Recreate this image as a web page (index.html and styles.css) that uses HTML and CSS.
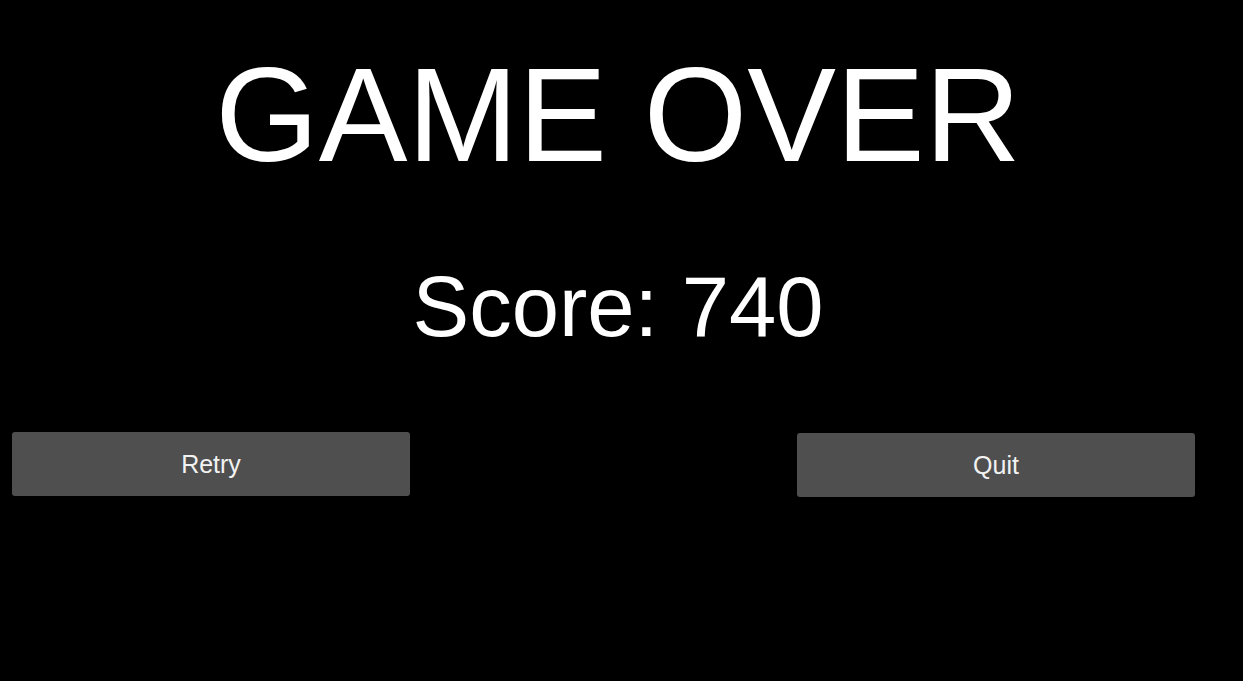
FILE: index.html
```html
<!DOCTYPE html>
<html lang="en">
<head>
    <meta charset="UTF-8">
    <meta name="viewport" content="width=device-width, initial-scale=1.0">
    <title>Game Over</title>
    <link rel="stylesheet" href="styles.css">
</head>
<body>
    <div id="end-screen">
        <h1 class="title">GAME OVER</h1>
        <div class="score">Score: <span id="final-score">740</span></div>

        <div class="actions">
            <button class="btn" onclick="retry()">Retry</button>
            <button class="btn" onclick="quit()">Quit</button>
        </div>
    </div>

    <script>
        // Reload the page to start a fresh round
        function retry() {
            location.reload();
        }

        function quit() {
            window.close();
        }
    </script>
</body>
</html>
```

FILE: styles.css
```css
html, body {
    margin: 0;
    height: 100%;
    background-color: #000;
}

body {
    font-family: "Liberation Sans", Arial, sans-serif;
    color: #fff;
}

#end-screen {
    display: flex;
    flex-direction: column;
    align-items: center;
    padding: 49px 7px 0 0;
}

.title {
    margin: 0;
    font-size: 133px;
    font-weight: normal;
    line-height: 133px;
}

.score {
    margin-top: 82px;
    font-size: 85px;
    line-height: 85px;
}

.actions {
    align-self: stretch;
    display: flex;
    justify-content: space-between;
    margin-top: 83px;
    padding: 0 41px 0 12px;
}

.btn {
    width: 398px;
    height: 64px;
    display: flex;
    align-items: center;
    justify-content: center;
    padding: 0;
    border: none;
    border-radius: 3px;
    background-color: #4f4f4f;
    color: #f2f2f2;
    font-family: inherit;
    font-size: 25px;
    cursor: pointer;
}

.btn + .btn {
    margin-top: 1px;
}
```
